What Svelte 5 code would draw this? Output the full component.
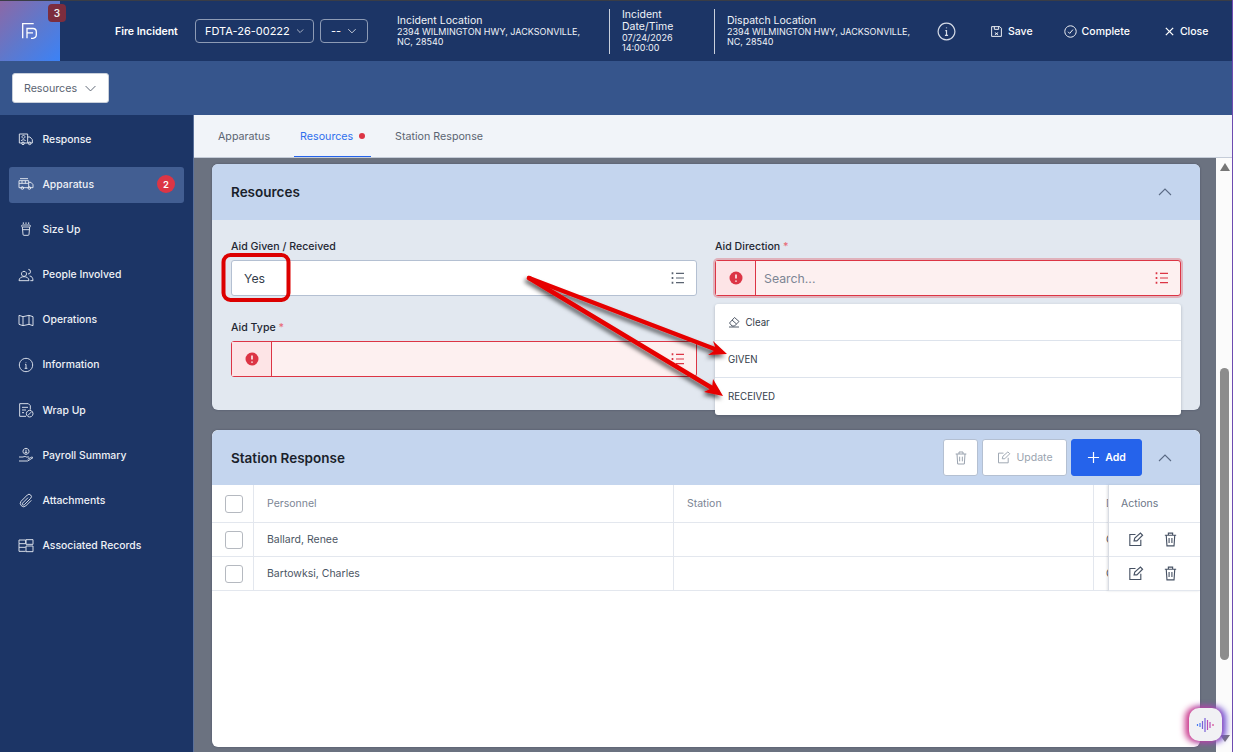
<script>
  const nav = [
    { label: 'Response', d: 'M2 4.500h12.500V18H2zM14.500 9H18l3.500 4v5h-7M5.500 18.500a2 2 0 1 0 4 0a2 2 0 1 0-4 0M15.500 18.500a2 2 0 1 0 4 0a2 2 0 1 0-4 0M8.200 6.500a2.200 2.200 0 1 0 .01 0M4.500 15c.5-2.500 6.500-2.500 7 0' },
    { label: 'Apparatus', d: 'M1.500 7h14.500v10.500H1.500zM16 9.500h3.500l3 3.500v4.500H16M1.500 11h14.500M6 7v4M11 7v4M4.500 18a2 2 0 1 0 4 0a2 2 0 1 0-4 0M15 18a2 2 0 1 0 4 0a2 2 0 1 0-4 0M3 4h12', active: true, badge: 2 },
    { label: 'Size Up', d: 'M6.500 9h11l-1 11a1.500 1.500 0 0 1-1.500 1.500H9A1.500 1.500 0 0 1 7.500 20zM6.500 9a1.500 1.500 0 0 1 1-3h9a1.500 1.500 0 0 1 1 3M7 13h10M8 2v2.500M12 2v2.500M16 2v2.500' },
    { label: 'People Involved', d: 'M9 6.500a3.800 3.800 0 1 0 .01 0M15.500 3.500a3.500 3.500 0 1 1-.5 7M1.500 20.500c0-8 15-8 15 0zM17.500 13.500c3 .2 5 2.500 5 7h-4' },
    { label: 'Operations', d: 'M1.500 5l6 2l9-2l6 2v13.500l-6-2l-9 2l-6-2zM7.500 7v13.500M16.500 5v13.500' },
    { label: 'Information', d: 'M12 2a10 10 0 1 0 .01 0M10.500 11H12v6M10 17h4M12 7.500v.8' },
    { label: 'Wrap Up', d: 'M12 21.500H2.500V2.500h13l3 3v6M6 8h9M6 12h6M6 16h3M17.500 12.500a5 5 0 1 0 .01 0M14.500 20.500l6-6' },
    { label: 'Payroll Summary', d: 'M12 2a4.500 4.500 0 1 0 .01 0M12 4v5M10 8.500h4M1.500 15h6c2-1 4-1 5 0h4M1.500 21h13l8-5c-1-1-3-1-4 0l-4 2.500' },
    { label: 'Attachments', d: 'M20 11l-8.500 8.500a5 5 0 0 1-7-7L14 3a3.400 3.400 0 0 1 5 5l-9.500 9.500a1.700 1.700 0 0 1-2.500-2.500l8-8' },
    { label: 'Associated Records', d: 'M1.500 3h10v5.500h-10zM1.500 8.500V20h10M1.500 14h10M12 2.500h10.500v7H12zM12 12h10.500v8.500H12z' },
  ];

  const rows = ['Ballard, Renee', 'Bartowksi, Charles'];

  const listIcon = 'M9 5h12M9 12h12M9 19h12';
  const trash = 'M4 6h16M9 6V3h6v3M6 6l1 15h10l1-15M10 10v7M14 10v7';
  const edit = 'M12 5H4v15.500h15.500v-8M10 14l1-4l8-7l3 3l-8 8z';
</script>

<div class="app">
  <header class="topbar">
    <div class="logo">
      <svg width="16" height="16" viewBox="0 0 16 16" fill="none" stroke="#fff" stroke-width="1.300">
        <path d="M.7 15.300V.7h11M5 15.300V5.500h6a3.300 3.300 0 0 1 3.300 3.300V12a3.300 3.300 0 0 1-3.300 3.300H9M5 9.800h6" />
      </svg>
      <span class="logo-badge">3</span>
    </div>
    <div class="module">Fire Incident</div>
    <button class="hselect num">FDTA-26-00222 <svg width="12" height="12" viewBox="0 0 16 16" fill="none" stroke="#fff" stroke-width="1.200"><path d="M2 5l6 6l6-6" /></svg></button>
    <button class="hselect dash">-- <svg width="12" height="12" viewBox="0 0 16 16" fill="none" stroke="#fff" stroke-width="1.200"><path d="M2 5l6 6l6-6" /></svg></button>

    <div class="info loc first">
      <div class="info-title">Incident Location</div>
      <div class="info-val">2394 WILMINGTON HWY, JACKSONVILLE, NC, 28540</div>
    </div>
    <div class="vline"></div>
    <div class="info when">
      <div class="info-title">Incident Date/Time</div>
      <div class="info-val">07/24/2026 14:00:00</div>
    </div>
    <div class="vline second"></div>
    <div class="info loc">
      <div class="info-title">Dispatch Location</div>
      <div class="info-val">2394 WILMINGTON HWY, JACKSONVILLE, NC, 28540</div>
    </div>

    <svg class="info-btn" width="19" height="19" viewBox="0 0 24 24" fill="none" stroke="#d7dde8" stroke-width="1.500">
      <path d="M12 1.500a10.500 10.500 0 1 0 .01 0M10.500 11H12v6M10 17h4M12 7v1" />
    </svg>
    <div class="action save">
      <svg width="13" height="13" viewBox="0 0 24 24" fill="none" stroke="#fff" stroke-width="1.700"><path d="M3 3h15l3 3v15H3zM8 3v5h8V3M9 14l6 4M15 14l-6 4" /></svg>
      Save
    </div>
    <div class="action complete">
      <svg width="13" height="13" viewBox="0 0 24 24" fill="none" stroke="#fff" stroke-width="1.700"><path d="M12 1.500a10.500 10.500 0 1 0 .01 0M7.500 12.500l3 3l6-7" /></svg>
      Complete
    </div>
    <div class="action close">
      <svg width="11" height="11" viewBox="0 0 12 12" fill="none" stroke="#fff" stroke-width="1.400"><path d="M2 2l8 8M10 2l-8 8" /></svg>
      Close
    </div>
  </header>

  <div class="subbar">
    <button class="section-select">Resources <svg width="13" height="13" viewBox="0 0 16 16" fill="none" stroke="#5b6472" stroke-width="1.200"><path d="M2 5l6 6l6-6" /></svg></button>
  </div>

  <div class="main">
    <nav class="sidebar">
      {#each nav as item}
        <div class="nav-item" class:active={item.active}>
          <svg width="16" height="16" viewBox="0 0 24 24" fill="none" stroke="#e4e8f0" stroke-width="1.400"><path d={item.d} /></svg>
          <span>{item.label}</span>
          {#if item.badge}<span class="nav-badge">{item.badge}</span>{/if}
        </div>
      {/each}
    </nav>

    <div class="content">
      <div class="tabs">
        <div class="tab">Apparatus</div>
        <div class="tab current">Resources <i class="dot"></i></div>
        <div class="tab">Station Response</div>
      </div>

      <div class="scroll">
        <div class="pane">
          <section class="card res">
            <div class="card-head">
              <h2>Resources</h2>
              <svg class="chev" width="16" height="16" viewBox="0 0 16 16" fill="none" stroke="#5b6b85" stroke-width="1.100"><path d="M2 11l6-6l6 6" /></svg>
            </div>
            <div class="form">
              <div class="field">
                <div class="label">Aid Given / Received</div>
                <div class="input">
                  <span class="value">Yes</span>
                  <svg width="16" height="16" viewBox="0 0 24 24" fill="none" stroke="#5b6472" stroke-width="1.700"><path d={listIcon} /><path d="M2.500 5h2.500M2.500 12h2.500M2.500 19h2.500" stroke-width="3" /></svg>
                </div>
              </div>
              <div class="field">
                <div class="label">Aid Direction <em>*</em></div>
                <div class="input bad focus">
                  <span class="err"><svg width="14" height="14" viewBox="0 0 14 14"><circle cx="7" cy="7" r="6.500" fill="#dc3545" /><path d="M7 3.500v4M7 9.500v1.200" stroke="#fff" stroke-width="1.500" /></svg></span>
                  <span class="placeholder">Search...</span>
                  <svg width="16" height="16" viewBox="0 0 24 24" fill="none" stroke="#dc3545" stroke-width="1.700"><path d={listIcon} /><path d="M2.500 5h2.500M2.500 12h2.500M2.500 19h2.500" stroke-width="3" /></svg>
                </div>
              </div>
              <div class="field">
                <div class="label">Aid Type <em>*</em></div>
                <div class="input bad">
                  <span class="err"><svg width="14" height="14" viewBox="0 0 14 14"><circle cx="7" cy="7" r="6.500" fill="#dc3545" /><path d="M7 3.500v4M7 9.500v1.200" stroke="#fff" stroke-width="1.500" /></svg></span>
                  <span class="placeholder"></span>
                  <svg width="16" height="16" viewBox="0 0 24 24" fill="none" stroke="#dc3545" stroke-width="1.700"><path d={listIcon} /><path d="M2.500 5h2.500M2.500 12h2.500M2.500 19h2.500" stroke-width="3" /></svg>
                </div>
              </div>
            </div>
            <div class="dropdown">
              <div class="opt clear">
                <svg width="12" height="12" viewBox="0 0 24 24" fill="none" stroke="#3f4a5a" stroke-width="1.800"><path d="M3 14L13 3l9 8l-9 9H8zM8 8l9 8M2 22h20" /></svg>
                Clear
              </div>
              <div class="opt">GIVEN</div>
              <div class="opt">RECEIVED</div>
            </div>
          </section>

          <section class="card station">
            <div class="card-head">
              <h2>Station Response</h2>
              <div class="head-actions">
                <button class="btn icon-only"><svg width="16" height="16" viewBox="0 0 24 24" fill="none" stroke="#9aa3af" stroke-width="1.500"><path d={trash} /></svg></button>
                <button class="btn upd"><svg width="15" height="15" viewBox="0 0 24 24" fill="none" stroke="#9aa3af" stroke-width="1.500"><path d={edit} /></svg>Update</button>
                <button class="btn add"><svg width="13" height="13" viewBox="0 0 14 14" fill="none" stroke="#fff" stroke-width="1.300"><path d="M7 1v12M1 7h12" /></svg>Add</button>
                <svg class="chev" width="16" height="16" viewBox="0 0 16 16" fill="none" stroke="#5b6b85" stroke-width="1.100"><path d="M2 11l6-6l6 6" /></svg>
              </div>
            </div>
            <div class="table">
              <div class="tr thead">
                <div class="td check"><i class="box"></i></div>
                <div class="td">Personnel</div>
                <div class="td">Station</div>
                <div class="td cut">D</div>
              </div>
              {#each rows as name}
                <div class="tr">
                  <div class="td check"><i class="box"></i></div>
                  <div class="td">{name}</div>
                  <div class="td"></div>
                  <div class="td cut">C</div>
                </div>
              {/each}
              <div class="sticky">
                <div class="st-head">Actions</div>
                {#each rows as name}
                  <div class="st-row">
                    <svg width="17" height="17" viewBox="0 0 24 24" fill="none" stroke="#475264" stroke-width="1.600"><path d={edit} /></svg>
                    <svg width="17" height="17" viewBox="0 0 24 24" fill="none" stroke="#475264" stroke-width="1.600"><path d={trash} /></svg>
                  </div>
                {/each}
              </div>
            </div>
          </section>
        </div>

        <div class="scrollbar">
          <i class="up"></i>
          <i class="thumb"></i>
          <i class="down"></i>
        </div>
      </div>
    </div>
  </div>

  <!-- red callouts drawn on top of the screenshot -->
  <svg class="marks" width="1233" height="752" viewBox="0 0 1233 752" fill="none">
    <defs>
      <filter id="sh" x="-10%" y="-10%" width="120%" height="120%">
        <feDropShadow dx="-2" dy="3" stdDeviation="2" flood-color="#000" flood-opacity="0.6" />
      </filter>
    </defs>
    <rect x="223.500" y="255" width="65" height="45" rx="7" stroke="#dc0000" stroke-width="4" />
    <g filter="url(#sh)">
      <path d="M529 278L720 351" stroke="#e60000" stroke-width="4.500" stroke-linecap="round" />
      <path d="M529 278L717 391" stroke="#e60000" stroke-width="4.500" stroke-linecap="round" />
      <path d="M727 354L713 341L716 349.500L708 355Z" fill="#e60000" />
      <path d="M723 396L713 379L712 388L704 392Z" fill="#e60000" />
    </g>
  </svg>

  <div class="assistant">
    <svg width="20" height="16" viewBox="0 0 20 16" fill="none" stroke-width="1.200">
      <path d="M1.500 7v2M4 6v4" stroke="#4b7bf0" />
      <path d="M6.500 4v8M9 1v14" stroke="#7a5fd8" />
      <path d="M11.500 3v10M14 5v6" stroke="#b84fb8" />
      <path d="M17 7v2" stroke="#d6478f" />
    </svg>
  </div>
  <i class="edge"></i>
</div>

<style>
  :global(body) { margin: 0; background: #1c3566; }

  .app {
    position: relative;
    width: 1233px;
    height: 752px;
    overflow: hidden;
    font-family: Inter, "Noto Sans", sans-serif;
    display: flex;
    flex-direction: column;
  }

  button { font-family: inherit; cursor: pointer; }

  /* top bar */
  .topbar {
    height: 60px;
    flex: none;
    background: #1c3566;
    border-top: 1px solid #3a3d46;
    display: flex;
    align-items: center;
    color: #fff;
  }

  .logo {
    position: relative;
    width: 60px;
    height: 60px;
    flex: none;
    display: flex;
    align-items: center;
    justify-content: center;
    background: linear-gradient(135deg, #8c68a6 0%, #5f78cc 50%, #3b82f6 100%);
  }

  .logo-badge {
    position: absolute;
    left: 48px;
    top: 3px;
    width: 18px;
    height: 18px;
    border-radius: 4px;
    background: #7c2d3e;
    font-size: 10px;
    font-weight: 600;
    display: flex;
    align-items: center;
    justify-content: center;
    color: #eee;
  }

  .module {
    margin-left: 55px;
    width: 80px;
    font-size: 10.500px;
    font-weight: 600;
  }

  .hselect {
    height: 24px;
    box-sizing: border-box;
    border: 1px solid #8d9bb5;
    border-radius: 4px;
    background: transparent;
    color: #fff;
    font-size: 11px;
    display: flex;
    align-items: center;
    gap: 6px;
    padding: 0 9px;
    white-space: nowrap;
  }
  .hselect.num { width: 119px; }
  .hselect.dash { width: 48px; margin-left: 6px; padding: 0 10px; }

  .info { color: #f0f3f8; flex: none; }
  .info.loc { width: 188px; }
  .info.first { margin-left: 29px; }
  .info.when { width: 70px; }

  .info-title { font-size: 10.500px; line-height: 12px; }
  .info-val { font-size: 9px; line-height: 10px; }

  .vline {
    width: 1px;
    height: 45px;
    flex: none;
    background: #c9d0dc;
    margin: 0 12px 0 24px;
  }
  .vline.second { margin-left: 22px; }

  .info-btn { margin-left: 22px; flex: none; }

  .action {
    display: flex;
    align-items: center;
    gap: 5px;
    font-size: 10.500px;
    font-weight: 500;
    white-space: nowrap;
  }
  .save { margin-left: 34px; }
  .complete { margin-left: 31px; }
  .close { margin-left: 34px; }

  /* section row */
  .subbar {
    height: 54px;
    flex: none;
    background: #36558c;
    display: flex;
    align-items: center;
    padding-left: 12px;
  }

  .section-select {
    width: 97px;
    height: 30px;
    background: #fff;
    border: 1px solid #c8cfda;
    border-radius: 3px;
    color: #5b6472;
    font-size: 10.700px;
    display: flex;
    align-items: center;
    justify-content: center;
    gap: 7px;
    padding: 0;
  }

  .main {
    flex: 1;
    display: flex;
    min-height: 0;
  }

  /* sidebar */
  .sidebar {
    width: 194px;
    flex: none;
    background: #1c3566;
    border-right: 1px solid #5a709a;
    box-sizing: border-box;
    padding: 7px 9px 0;
    display: flex;
    flex-direction: column;
    gap: 9.200px;
  }

  .nav-item {
    height: 36px;
    width: 175px;
    flex: none;
    box-sizing: border-box;
    padding-left: 9px;
    border-radius: 3px;
    display: flex;
    align-items: center;
    gap: 8.500px;
    color: #eef1f6;
    font-size: 10.400px;
    font-weight: 500;
    padding-bottom: 2px;
  }
  .nav-item.active { background: #425e92; }

  .nav-badge {
    margin-left: auto;
    margin-right: 9px;
    width: 18px;
    height: 18px;
    border-radius: 50%;
    background: #dc3545;
    color: #fff;
    font-size: 9.500px;
    font-weight: 600;
    display: flex;
    align-items: center;
    justify-content: center;
  }

  /* tabs */
  .content {
    flex: 1;
    min-width: 0;
    display: flex;
    flex-direction: column;
  }

  .tabs {
    height: 43px;
    flex: none;
    box-sizing: border-box;
    background: #f1f4f9;
    border-bottom: 1px solid #c5ccd8;
    display: flex;
    padding-left: 24px;
  }

  .tab {
    display: flex;
    align-items: center;
    gap: 5px;
    margin-right: 24px;
    font-size: 10.700px;
    color: #5b6472;
    white-space: nowrap;
  }
  .tab.current {
    color: #2f6fed;
    width: 77px;
    box-sizing: border-box;
    padding-left: 6px;
    box-shadow: inset 0 -1px 0 #2563eb;
  }
  .dot {
    width: 6px;
    height: 6px;
    margin-left: 1px;
    border-radius: 50%;
    background: #dc3545;
  }

  .scroll {
    flex: 1;
    min-height: 0;
    display: flex;
    background: #6b7280;
  }

  .pane {
    flex: 1;
    min-width: 0;
    padding: 6px 16px 0 18px;
    display: flex;
    flex-direction: column;
    gap: 20px;
  }

  /* cards */
  .card {
    position: relative;
    border-radius: 6px;
    background: #e2e8f0;
    box-shadow: 0 0 2px rgba(40, 50, 70, 0.5);
  }
  .res { height: 246px; flex: none; }
  .station { height: 317px; flex: none; background: #fff; overflow: hidden; }

  .card-head {
    height: 56px;
    box-sizing: border-box;
    background: #c4d5ee;
    border-radius: 6px 6px 0 0;
    padding: 0 27px 0 19px;
    display: flex;
    align-items: center;
    justify-content: space-between;
  }
  .station .card-head { height: 55px; }

  .card-head h2 {
    margin: 0;
    font-size: 13.500px;
    font-weight: 600;
    color: #1a1f2b;
  }

  .form {
    display: grid;
    grid-template-columns: 466px 466px;
    column-gap: 18px;
    row-gap: 25px;
    padding: 20px 19px 0;
  }

  .label {
    font-size: 10.600px;
    font-weight: 500;
    color: #1f2733;
    line-height: 14px;
    margin-bottom: 6px;
  }
  .label em { color: #e8707c; font-style: normal; }

  .input {
    height: 36px;
    box-sizing: border-box;
    background: #fff;
    border: 1px solid #b4c0d2;
    border-radius: 3px;
    display: flex;
    align-items: center;
    padding-right: 10px;
    font-size: 12.300px;
    color: #333c4a;
  }
  .input .value { flex: 1; padding-left: 12px; }

  .input.bad {
    background: #fdf0f0;
    border-color: #dc3545;
  }
  .input.focus { box-shadow: 0 0 0 2px rgba(220, 53, 69, 0.3); }

  .err {
    width: 39px;
    height: 100%;
    flex: none;
    background: #fde4e6;
    border-right: 1px solid #dc3545;
    display: flex;
    align-items: center;
    justify-content: center;
  }

  .placeholder {
    flex: 1;
    padding-left: 8px;
    color: #7c8594;
  }

  .dropdown {
    position: absolute;
    left: 503px;
    top: 140px;
    width: 466px;
    background: #fff;
    border-radius: 3px;
    box-shadow: 0 1px 3px rgba(40, 50, 70, 0.3);
  }

  .opt {
    height: 37px;
    box-sizing: border-box;
    padding-left: 13px;
    display: flex;
    align-items: center;
    gap: 5.500px;
    font-size: 9.700px;
    color: #333c4a;
    border-bottom: 1px solid #dde3ec;
  }
  .opt:last-child { border-bottom: none; }

  .head-actions {
    display: flex;
    align-items: center;
    gap: 4px;
  }
  .head-actions .chev { margin-left: 11px; }

  .btn {
    height: 37px;
    box-sizing: border-box;
    border: 1px solid #b4c0d2;
    border-radius: 3px;
    background: #fff;
    display: flex;
    align-items: center;
    justify-content: center;
    gap: 5px;
    padding: 0;
    font-size: 10.500px;
  }
  .icon-only { width: 35px; }
  .upd { width: 85px; color: #9aa3af; }
  .add {
    width: 71px;
    background: #2563eb;
    border-color: #2563eb;
    color: #fff;
    font-weight: 600;
  }

  /* table */
  .table { position: relative; }

  .tr {
    display: grid;
    grid-template-columns: 42px 420px 420px 1fr;
    height: 34px;
    box-sizing: border-box;
    border-bottom: 1px solid #e3e7ee;
    font-size: 10.500px;
    color: #4b5563;
  }
  .thead { height: 38px; color: #7b8594; }

  .td {
    display: flex;
    align-items: center;
    padding-left: 13px;
    border-right: 1px solid #e3e7ee;
    overflow: hidden;
  }
  .td.cut { border-right: none; padding-left: 12px; }

  .box {
    width: 18px;
    height: 18px;
    box-sizing: border-box;
    border: 1px solid #b5b9c0;
    border-radius: 3px;
    background: #fff;
  }

  .sticky {
    position: absolute;
    right: 0;
    top: 0;
    width: 91px;
    background: #fff;
    border-left: 1px solid #d8dce3;
    box-shadow: -1px 0 2px rgba(60, 70, 90, 0.15);
  }

  .st-head {
    height: 38px;
    box-sizing: border-box;
    padding-left: 12px;
    display: flex;
    align-items: center;
    font-size: 10.500px;
    color: #6b7586;
    border-bottom: 1px solid #e3e7ee;
  }

  .st-row {
    height: 34px;
    box-sizing: border-box;
    padding-left: 18px;
    display: flex;
    align-items: center;
    gap: 18px;
    border-bottom: 1px solid #e3e7ee;
  }

  /* scrollbar */
  .scrollbar {
    position: relative;
    width: 17px;
    flex: none;
    background: #fbfbfb;
  }
  .scrollbar i { position: absolute; display: block; }
  .thumb {
    left: 4px;
    top: 210px;
    width: 9px;
    height: 292px;
    border-radius: 5px;
    background: #8c8c8c;
  }
  .up, .down {
    left: 4px;
    width: 0;
    height: 0;
    border-left: 5px solid transparent;
    border-right: 5px solid transparent;
  }
  .up { top: 5px; border-bottom: 8px solid #767676; }
  .down { bottom: 10px; border-top: 7px solid #767676; }

  .marks {
    position: absolute;
    left: 0;
    top: 0;
    pointer-events: none;
  }

  .assistant {
    position: absolute;
    left: 1189px;
    top: 708px;
    width: 33px;
    height: 33px;
    border-radius: 10px;
    background: #f1f1f4;
    display: flex;
    align-items: center;
    justify-content: center;
    box-shadow: -3px 0 6px 1px #d0408f, 3px 0 6px 1px #6d55d8;
  }

  .edge {
    position: absolute;
    right: 0;
    top: 0;
    width: 1px;
    height: 752px;
    background: #6d4bb0;
  }
</style>
